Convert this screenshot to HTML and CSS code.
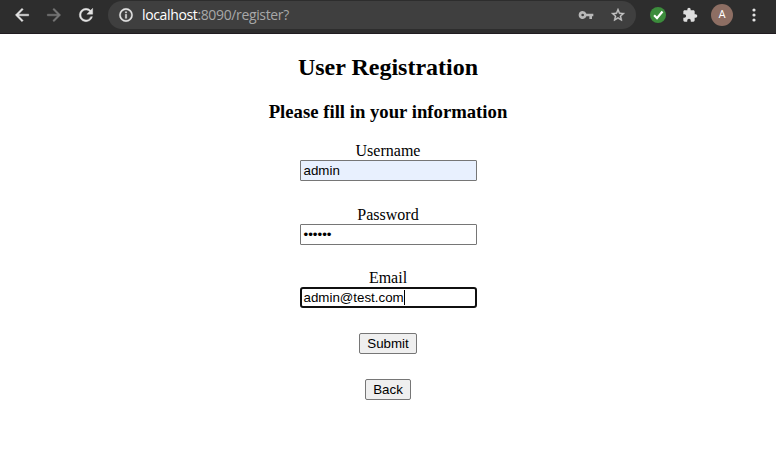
FILE: index.html
```html
<!DOCTYPE html>
<html lang="en">
<head>
<meta charset="utf-8">
<title>User Registration</title>
<link rel="stylesheet" href="styles.css">
</head>
<body>
<header class="toolbar">
  <svg class="nav back" viewBox="0 0 24 24"><path d="M20 11H7.83l5.59-5.59L12 4l-8 8 8 8 1.41-1.41L7.83 13H20v-2z"/></svg>
  <svg class="nav forward" viewBox="0 0 24 24"><path d="M12 4l-1.41 1.41L16.17 11H4v2h12.17l-5.58 5.59L12 20l8-8z"/></svg>
  <svg class="nav reload" viewBox="0 0 24 24"><path d="M17.65 6.35A7.958 7.958 0 0 0 12 4a8 8 0 1 0 7.73 10h-2.08A5.99 5.99 0 0 1 12 18a6 6 0 1 1 0-12c1.66 0 3.14.69 4.22 1.78L13 11h7V4l-2.35 2.35z"/></svg>
  <div class="address">
    <svg class="info" viewBox="0 0 24 24"><path d="M11 17h2v-6h-2v6zm0-8h2V7h-2v2zm1-7a10 10 0 1 0 0 20 10 10 0 0 0 0-20zm0 18a8 8 0 1 1 0-16 8 8 0 0 1 0 16z"/></svg>
    <span class="url"><span class="host">localhost</span>:8090/register?</span>
    <svg class="key" viewBox="0 0 24 24"><path fill-rule="evenodd" d="M12.65 10A5.99 5.99 0 0 0 7 6a6 6 0 1 0 5.65 8H17v4h4v-4h2v-4H12.65zM7 14a2 2 0 1 1 0-4 2 2 0 0 1 0 4z"/></svg>
    <svg class="star" viewBox="0 0 24 24"><path d="M22 9.24l-7.19-.62L12 2 9.19 8.63 2 9.24l5.46 4.73L5.82 21 12 17.27 18.18 21l-1.63-7.03L22 9.24zM12 15.4l-3.76 2.27 1-4.28-3.32-2.88 4.38-.38L12 6.1l1.71 4.04 4.38.38-3.32 2.88 1 4.28L12 15.4z"/></svg>
  </div>
  <svg class="check" viewBox="0 0 16 16"><circle cx="8" cy="8" r="8"/><path d="M4.100 8.200l2.900 3L12.500 4.500"/></svg>
  <svg class="puzzle" viewBox="0 0 24 24"><path d="M20.5 11H19V7c0-1.1-.9-2-2-2h-4V3.500a2.500 2.500 0 0 0-5 0V5H4c-1.100 0-2 .9-2 2v3.800h1.500a2.700 2.700 0 0 1 0 5.400H2V20c0 1.100.9 2 2 2h3.800v-1.500a2.700 2.700 0 0 1 5.400 0V22H17c1.100 0 2-.9 2-2v-4h1.500a2.500 2.500 0 0 0 0-5z"/></svg>
  <span class="avatar">A</span>
  <svg class="more" viewBox="0 0 4 14"><circle cx="2" cy="2" r="1.600"/><circle cx="2" cy="7" r="1.600"/><circle cx="2" cy="12" r="1.600"/></svg>
</header>
<main class="page">
  <h2>User Registration</h2>
  <h3>Please fill in your information</h3>
  <div class="group"><div class="label">Username</div><div class="field filled">admin</div></div>
  <div class="group"><div class="label">Password</div><div class="field">••••••</div></div>
  <div class="group email"><div class="label">Email</div><div class="field focused">admin@test.com<span class="caret"></span></div></div>
  <button class="submit" type="button">Submit</button>
  <button class="return" type="button">Back</button>
</main>
</body>
</html>
```

FILE: styles.css
```css
* { box-sizing: border-box; }
body { margin: 0; background: #fff; color: #000; font-family: "Liberation Serif", serif; }
svg { display: block; flex: none; }
.toolbar { display: flex; align-items: center; height: 34px; padding-bottom: 4px; background: #2d2d2d; border-bottom: 1px solid #201c20; }
.nav { width: 20px; height: 20px; fill: #e3e3e3; stroke: #e3e3e3; stroke-width: .5; }
.back { margin-left: 12px; }
.forward { margin-left: 12px; fill: #777; stroke: #777; }
.reload { margin-left: 12px; }
.address { display: flex; align-items: center; width: 528px; height: 28px; margin: 1px 0 0 12px; padding: 0 10px; border-radius: 14px; background: #3f3f3f; }
.info { width: 16px; height: 16px; fill: #e3e3e3; stroke: #e3e3e3; stroke-width: .6; }
.url { margin-left: 8px; font: 14px/20px "Open Sans", sans-serif; color: #a8a8a8; white-space: nowrap; letter-spacing: -0.36px; }
.host { color: #fff; }
.key { width: 16px; height: 16px; margin-left: auto; fill: #b8b8b8; }
.star { width: 16px; height: 16px; margin-left: 16px; fill: #c8c8c8; stroke: #c8c8c8; stroke-width: .6; }
.check { width: 16px; height: 16px; margin-left: 14px; }
.check circle { fill: #3c8c3c; }
.check path { fill: none; stroke: #fff; stroke-width: 2.2; }
.puzzle { width: 16px; height: 16px; margin-left: 16px; fill: #dedede; }
.avatar { width: 22px; height: 22px; margin-left: 13px; border-radius: 50%; background: #8d6e63; color: #fff; font: 11px/22px Roboto, sans-serif; text-align: center; }
.more { width: 4px; height: 14px; margin-left: 19px; fill: #e3e3e3; }
.page { display: flex; flex-direction: column; align-items: center; padding-top: 20px; }
h2 { margin: 0; font-size: 24px; line-height: 27px; }
h3 { margin: 20px 0 0; font-size: 18.720px; line-height: 22px; }
.group { width: 177px; height: 39px; margin-top: 25px; }
h3 + .group { margin-top: 19px; }
.group.email { margin-top: 24px; }
.label { font-size: 16px; line-height: 18px; text-align: center; }
.field { display: flex; align-items: center; height: 21px; padding: 0 3px; border: 1px solid #767676; border-radius: 1px; font: 13.333px/15px "Liberation Sans", sans-serif; }
.filled { background: #e8f0fe; }
.focused { border: 2px solid #101010; border-radius: 3px; padding: 0 2px; }
.caret { width: 1px; height: 15px; background: #000; }
button { height: 21px; padding: 0; border: 1px solid #767676; border-radius: 2px; background: #efefef; color: #000; font: 13.333px/15px "Liberation Sans", sans-serif; }
.submit { width: 58px; margin-top: 25px; }
.return { width: 46px; margin-top: 25px; }
```
